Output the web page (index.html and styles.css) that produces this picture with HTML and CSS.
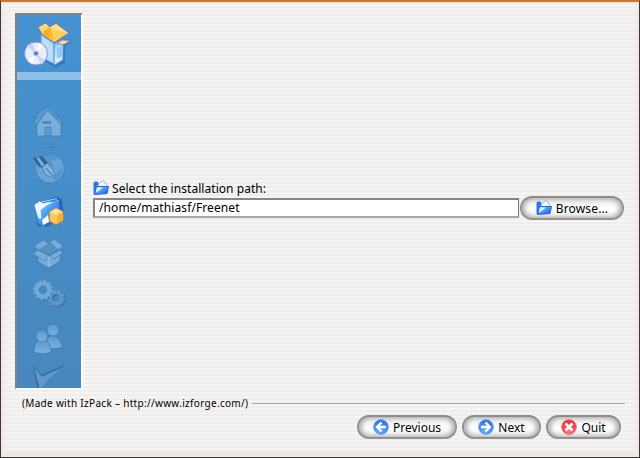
FILE: index.html
```html
<!DOCTYPE html>
<html lang="en">
<head>
<meta charset="utf-8">
<title>IzPack - Installation of Freenet</title>
<link rel="stylesheet" href="styles.css">
</head>
<body>
<svg class="defs" aria-hidden="true">
  <defs>
    <linearGradient id="ice" x1="0" y1="0" x2="1" y2="1"><stop offset="0" stop-color="#69b4f4"/><stop offset=".6" stop-color="#e8f5ff"/><stop offset="1" stop-color="#9accfa"/></linearGradient>
    <linearGradient id="folder" x1="0" y1="0" x2="1" y2="1"><stop offset="0" stop-color="#d9f1ff"/><stop offset=".4" stop-color="#55a9f5"/><stop offset="1" stop-color="#0754e4"/></linearGradient>
    <linearGradient id="faded" x1="0" y1="0" x2="0" y2="1"><stop offset="0" stop-color="#5a9ace"/><stop offset="1" stop-color="#79b1df"/></linearGradient>
    <radialGradient id="blue" cx=".45" cy=".75" r=".75"><stop offset="0" stop-color="#69b8ff"/><stop offset="1" stop-color="#2866ec"/></radialGradient>
    <radialGradient id="red" cx=".5" cy=".8" r=".8"><stop offset="0" stop-color="#ff7777"/><stop offset="1" stop-color="#ee2335"/></radialGradient>
    <symbol id="open-folder" viewBox="0 0 16 16">
      <path d="M.5 14V3L1.500 1.500h3l1 2h2l3-2.500 3 3.500v4l-2 5z" fill="#2f74e8"/>
      <path d="M4 8l2-5 4.500-2.500 3.500 5-2 5z" fill="#f5faff" stroke="#879ccd" stroke-width=".7"/>
      <path d="M3.500 6.500h12l-1.500 7-12.500 1z" fill="url(#folder)" stroke="#2461dc"/>
      <path d="M4 7.500h6l-5 4-2.500 1z" fill="#d3f2ff"/>
    </symbol>
  </defs>
</svg>
<div class="window">
  <main class="main">
    <aside class="sidebar">
      <svg class="logo" viewBox="17 15 64 57">
        <path d="M43 42l12 6 15-9 1 3-6 4v17l-9 5-12-7z" fill="#2463a4" opacity=".5"/>
        <path d="M41 33l13 10v21l-13-7z" fill="#b8dfff" stroke="#6f8ddc"/>
        <path d="M54 44l9-5v21l-9 5z" fill="url(#ice)" stroke="#7088d4" stroke-width=".8"/>
        <path d="M57 48l5-3v11l-5 3z" fill="#8dcafa"/>
        <path d="M38 27l8-4 4 4 6-4 13 10-15 10-12-8z" fill="#ffc84a" stroke="#6878c8" stroke-width="1.300"/>
        <path d="M38.500 27.500l7-4 4 4-1 10-5-3z" fill="#ffd878"/>
        <path d="M50 27.500l-1 11-6-4v-3z" fill="#f5ad24"/>
        <path d="M50 27.500l4 14-5-3z" fill="#f9b62e"/>
        <path d="M50 27l6-3 12 9-7 4z" fill="#ffe08a"/><path d="M51 29l17 4-14 9z" fill="#ffce57"/>
        <path d="M57 44l5-4 9 .5-7 4z" fill="#ffe18c" stroke="#6276ba" stroke-width=".8"/>
        <circle cx="36" cy="53.500" r="11.500" fill="#e8eefe" stroke="#858edd"/>
        <path d="M36 53.500L27 46a12 12 0 0 1 5-3zM36 53.500l9 7a12 12 0 0 1-4 4z" fill="#c8d2f7"/>
        <path d="M36 53.500L39 43a11 11 0 0 1 4 3zM36 53.500L32 64a11 11 0 0 1-4-4z" fill="#fff"/>
        <circle cx="36" cy="53.500" r="3" fill="#b3caee"/><circle cx="36" cy="53.500" r="1.700" fill="#3b76b8"/>
      </svg>
      <div class="band"></div>
      <div class="steps">
        <svg viewBox="17 99 64 44"><path d="M37 121l10-13 14 12v16H37z" fill="#79afdc" stroke="#4280b5" stroke-width=".8"/><path d="M33.500 123l3-9 11-8 15 16v4L47.500 110 36 126z" fill="#5b9ace" stroke="#3c77aa" stroke-width=".8"/><path d="M45 127h6v9h-6z" fill="#5e9acd" stroke="#4280b5" stroke-width=".7"/><path d="M42 121h9v3h-9z" fill="#4d8cc2"/></svg>
        <svg class="globe" viewBox="17 143 64 44"><path d="M44 147.500q5-1 9 0" stroke="#3d7db5" fill="none"/><circle cx="50" cy="168.500" r="14.500" fill="#67a5d7" stroke="#3d7fb8" stroke-width=".8"/><path d="M41 158q6-5 13-3l5 4-9 2 4 5-8 2zM58 171l5-3-2 8-5 4-3-3z" fill="#5896ca"/><path d="M33 158l9-2 6 7-4 5-5-1z" fill="#2f6494"/><path d="M36 157.500l3 0 6 8-3 1z" fill="#7ab0d9"/><path d="M42 168l5-5 6 6 3 10-10-4z" fill="#80b3dc" stroke="#3b75a9" stroke-width=".7"/><path d="M46 168l8 9" stroke="#2e699e"/></svg>
        <svg viewBox="17 187 64 44"><path d="M36 208l26-10 2 16-16 13-11-1z" fill="#245d98" opacity=".6"/><path d="M44 202l13-5 2 1 3 14-17 8z" fill="#286de6" stroke="#1851bd" stroke-width=".7"/><path d="M42 202l15-3.500M43 204l16-3.500" stroke="#a5dcff"/><path d="M34.500 205l5-3.500 4 2 3-1.500 12-1v12l-15 13-5-3z" fill="url(#folder)" stroke="#4b90e4" stroke-width=".7"/><path d="M34.500 205l5-3.500 4 2 3-1 7-.5-8 4-5 4 1 9-3-1z" fill="#edfaff"/><path d="M42 220l6-5 1 7-6 3z" fill="#fff"/><path d="M49.500 212l6.500-4 7 3.500v9l-7 4-6.500-3.500z" fill="#ffc75a" stroke="#d58b27" stroke-width=".7"/><path d="M50 212l6-3.500 6.500 3.500-6 3z" fill="#ffe194"/><path d="M57 215l5.500-3v8L57 224z" fill="#f9ae35"/></svg>
        <svg viewBox="17 231 64 44"><g stroke="#427fb4" stroke-width=".7" fill="#78acd7"><path d="M38 250l11 6 11-6v11l-11 7-11-6z"/><path d="M38 249l11-9 11 9-11 6z" fill="#5891c2"/><path d="M34 246l9-6 6 4-10 6zM50 242l4-3 9 7-5 4zM33 254l5-4 11 6-4 5zM49 256l11-6 3 3-9 6z"/></g><path d="M49 256v11" stroke="#9cc5e6" fill="none"/></svg>
        <svg viewBox="17 275 64 44"><g fill="none"><circle cx="57" cy="299" r="5" stroke="#396f9e" stroke-width="3"/><circle cx="57" cy="299" r="7.500" stroke="#396f9e" stroke-width="2" stroke-dasharray="2.800 1.912"/><circle cx="56" cy="298" r="5.500" stroke="#5f98c9" stroke-width="3.500"/><circle cx="56" cy="298" r="7.500" stroke="#5f98c9" stroke-width="2" stroke-dasharray="2.800 1.912"/><circle cx="43.500" cy="291" r="7" stroke="#3d77a9" stroke-width="5"/><circle cx="43" cy="290" r="6.500" stroke="#70a7d4" stroke-width="4.500"/><circle cx="43" cy="290" r="9" stroke="#70a7d4" stroke-width="2" stroke-dasharray="2.800 1.912"/></g></svg>
        <svg viewBox="17 319 64 44"><g fill="url(#faded)" stroke="#3a74a7" stroke-width=".7"><path d="M45 347c0-7 3-10 6-11h4c4 2 7 7 7 11-4 2-12 2-17 0z"/><circle cx="53" cy="330" r="6"/><path d="M34 352c0-8 3-11 6-12h5c4 2 6 7 6 12-4 2-13 2-17 0z"/><circle cx="42" cy="336" r="6"/></g></svg>
        <svg viewBox="17 363 64 44"><path d="M33 366l9 9 23-10-15 12-9 13h-3z" fill="#2f6696"/><path d="M34 367.500l8 9 20-9-13 11-9 12z" fill="#6098c8"/></svg>
      </div>
    </aside>
    <section class="content">
      <div class="path-label"><svg class="icon"><use href="#open-folder"/></svg><label for="path">Select the installation path:</label></div>
      <div class="path-row">
        <input class="path-input" id="path" type="text" value="/home/mathiasf/Freenet">
        <button class="button browse"><svg class="icon"><use href="#open-folder"/></svg><span>Browse...</span></button>
      </div>
    </section>
  </main>
  <div class="credit"><span>(Made with IzPack – http://www.izforge.com/)</span></div>
  <footer class="buttons">
    <button class="button previous"><svg class="icon" viewBox="0 0 16 16"><circle cx="8" cy="8" r="7.300" fill="url(#blue)" stroke="#6497ee"/><path d="M8.500 3.500L4 8l4.500 4.500M4.500 8H13" fill="none" stroke="#fff" stroke-width="2.300"/></svg><span>Previous</span></button>
    <button class="button next"><svg class="icon" viewBox="0 0 16 16"><circle cx="8" cy="8" r="7.300" fill="url(#blue)" stroke="#6497ee"/><path d="M7.500 3.500L12 8l-4.500 4.500M11.500 8H3" fill="none" stroke="#fff" stroke-width="2.300"/></svg><span>Next</span></button>
    <button class="button quit"><svg class="icon" viewBox="0 0 16 16"><circle cx="8" cy="8" r="7.300" fill="url(#red)" stroke="#ef6573"/><path d="M4.500 4.500l7 7M11.500 4.500l-7 7" stroke="#fff" stroke-width="2.500"/></svg><span>Quit</span></button>
  </footer>
</div>
</body>
</html>
```
FILE: styles.css
```css
* { box-sizing: border-box; }
body { margin: 0; background: #3e3635; font: 12px/16px "Noto Sans", sans-serif; color: #000; }
.defs { position: absolute; width: 0; height: 0; }
.window {
  height: 458px;
  overflow: hidden;
  border: solid #3e3635;
  border-width: 0 1px 1px;
  border-top: 2px solid #c57832;
  box-shadow: inset 4px 0 #f0ebe8, inset -4px 0 #f0ebe8, inset 0 -5px #ece8e3, inset 0 1px #eadfd5;
  padding: 11px 14px 0;
  background: repeating-linear-gradient(to bottom, #efeeed 0 2px, #f5f4f3 2px 4px);
}
.main { display: flex; height: 376px; }
.sidebar {
  width: 68px;
  overflow: hidden;
  border: 2px solid;
  border-color: #85817e #fff #fff #85817e;
  border-bottom-width: 1px;
  background: linear-gradient(#4593d2, #4787bd);
}
.logo { display: block; width: 64px; height: 57px; }
.band { height: 8px; background: #8dbfe9; }
.steps { padding-top: 19px; }
.steps svg { display: block; width: 64px; height: 44px; }
.steps .globe { overflow: visible; }
.content { flex: 1; padding: 167px 0 0 10px; }
.path-label { display: flex; align-items: center; gap: 3px; height: 16px; }
.path-label label { margin-top: 2px; letter-spacing: .05px; }
.icon { display: block; width: 16px; height: 16px; flex: none; }
.path-row { display: flex; gap: 1px; height: 24px; }
.path-input {
  width: 426px;
  height: 20px;
  margin-top: 2px;
  border: 2px solid;
  border-color: #858585 #777 #a8a8a8 #858585;
  border-right-width: 1px;
  border-radius: 0;
  padding: 0 4px 1px;
  background: #fff;
  font: inherit;
  color: #000;
  letter-spacing: .1px;
  outline: 0;
}
.button {
  display: flex;
  align-items: center;
  justify-content: center;
  gap: 4px;
  height: 24px;
  border: 2px solid;
  border-color: #8c8c8c #929292 #929292;
  border-radius: 12px;
  padding: 0;
  background: linear-gradient(#dcdcdc, #f7f7f7 35%, #fff 60%, #e5e5e5);
  box-shadow: inset 3px 0 4px #b5b5b5, inset -3px 0 4px #b5b5b5;
  font: inherit;
  color: #000;
}
.button span { margin-top: 1px; }
.browse { width: 104px; letter-spacing: .15px; }
.previous { width: 100px; }
.next { width: 79px; }
.quit { width: 75px; }
.credit { display: flex; align-items: center; gap: 4px; height: 16px; margin: 6px 0 0 7px; font-size: 10px; letter-spacing: .31px; }
.credit::after { content: ""; flex: 1; height: 1px; background: #aaa; }
.buttons { display: flex; justify-content: flex-end; gap: 5px; margin: 4px 4px 0 0; }
```
